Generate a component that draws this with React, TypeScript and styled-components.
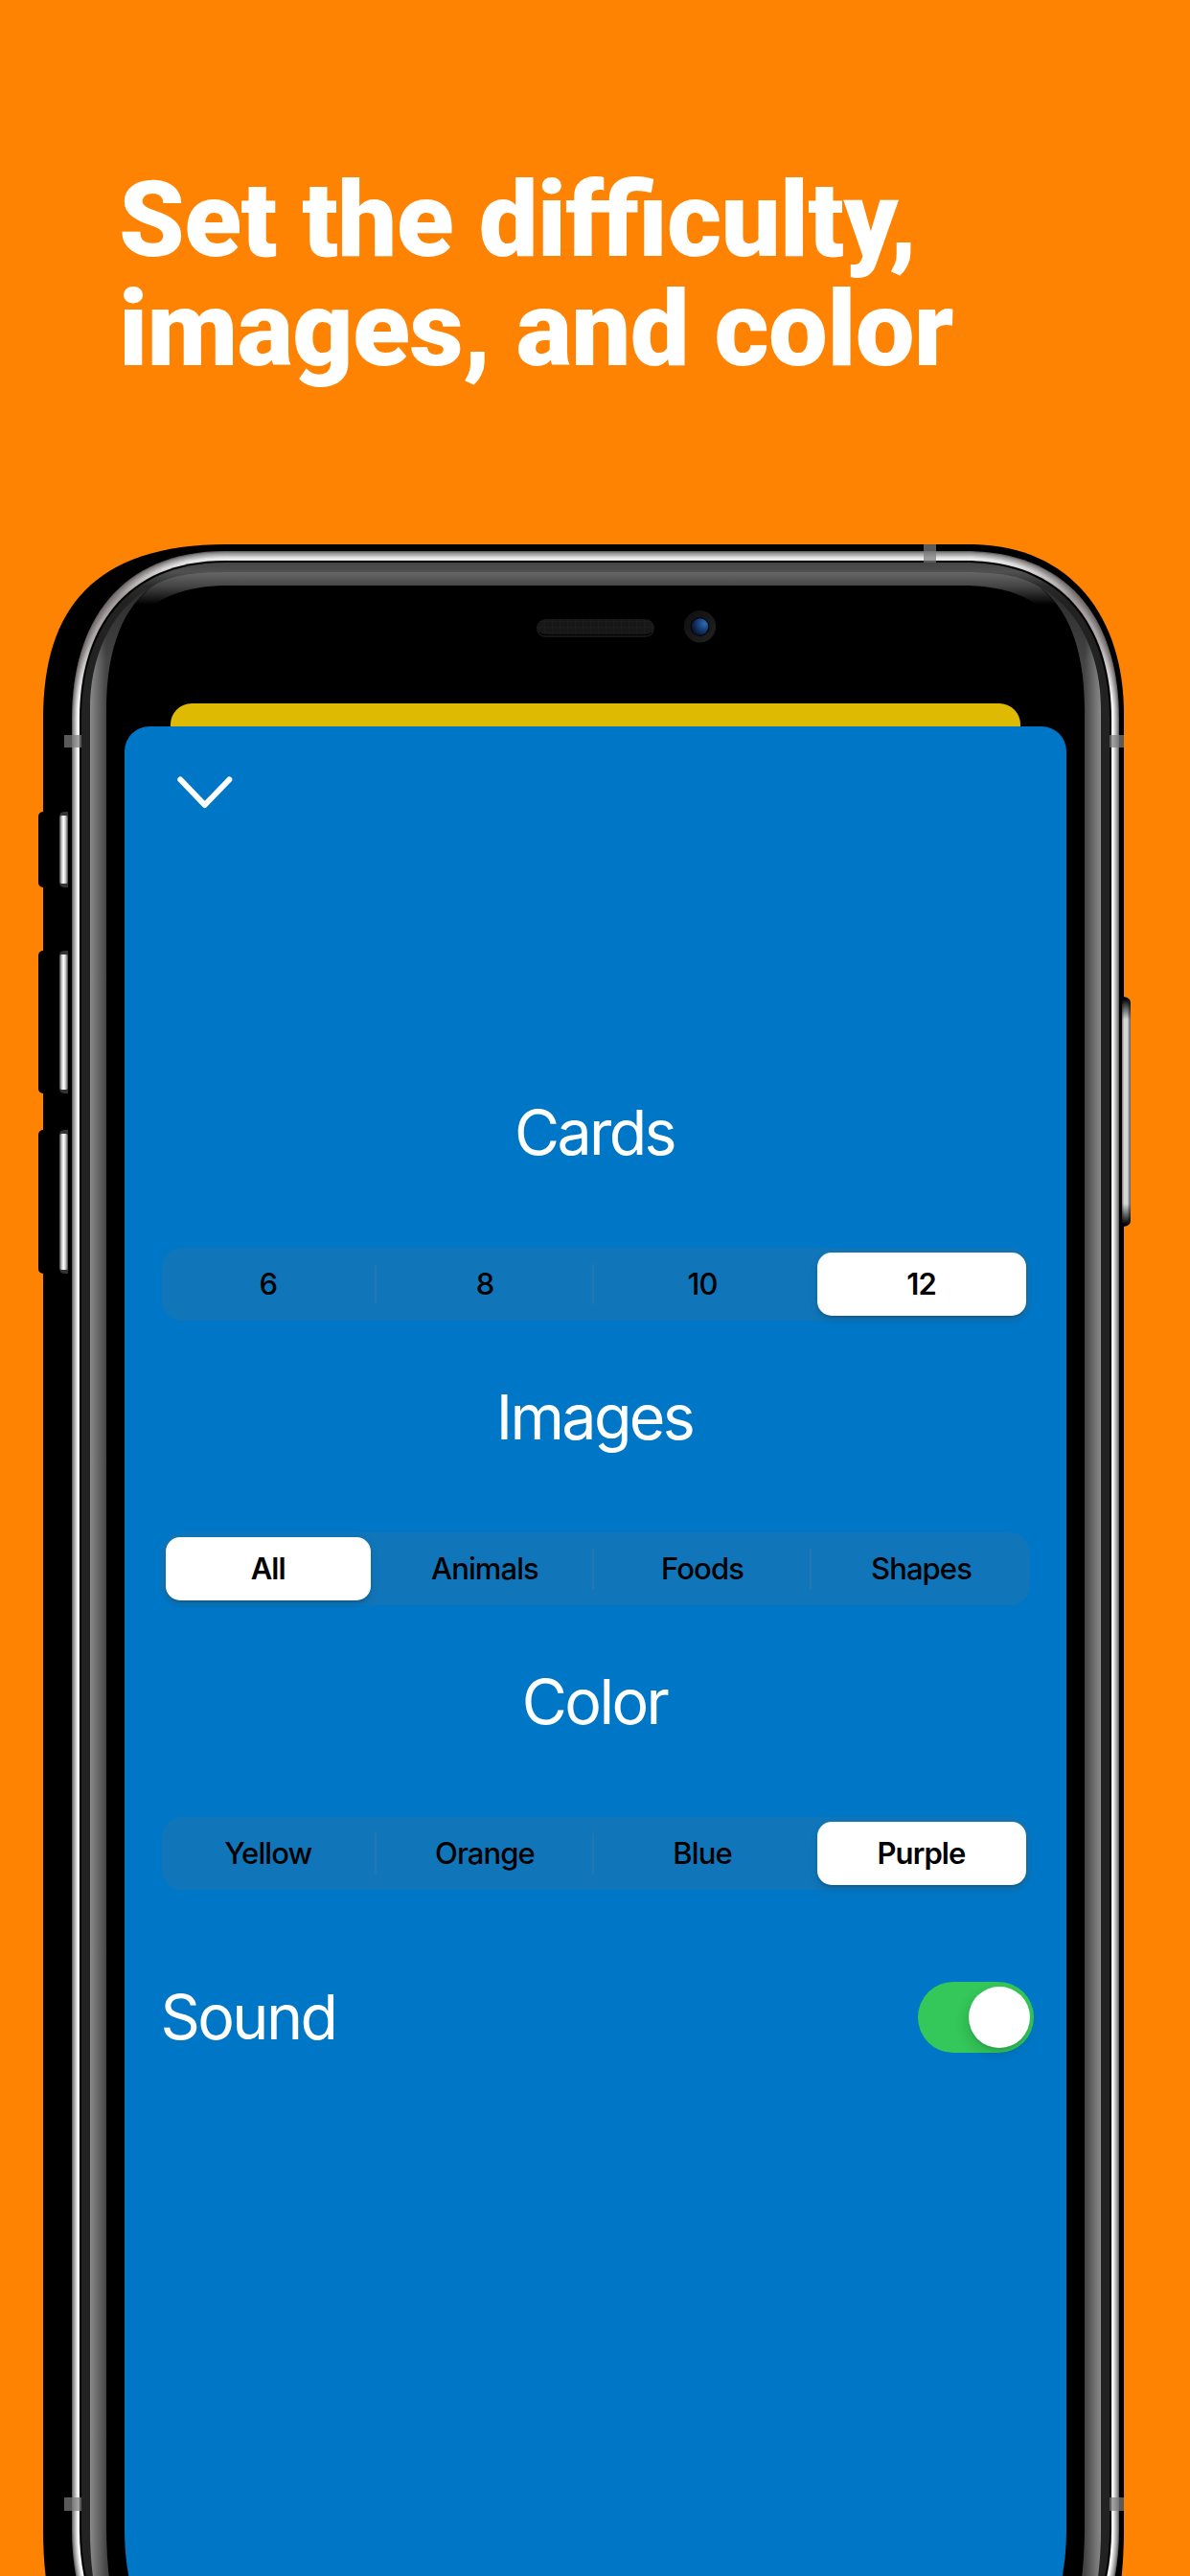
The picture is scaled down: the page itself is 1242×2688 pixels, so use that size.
import React, { useState } from 'react';
import styled, { createGlobalStyle } from 'styled-components';

const GlobalStyle = createGlobalStyle`
  html, body { margin: 0; padding: 0; background: #ff8303; }
  * { box-sizing: border-box; }
  button { border: 0; padding: 0; margin: 0; background: none; font: inherit; color: inherit; }
`;

const Page = styled.main`
  position: relative;
  display: flex;
  flex-direction: column;
  width: 1242px;
  height: 2688px;
  overflow: hidden;
  background: #ff8303;
  font-family: Inter, 'Liberation Sans', sans-serif;
`;

const Headline = styled.h1`
  flex: none;
  height: 734px;
  margin: 0;
  padding: 173px 0 0 124px;
  color: #fff;
  font-family: Roboto, 'Liberation Sans', sans-serif;
  font-size: 110px;
  font-weight: 900;
  line-height: 114px;
  letter-spacing: -0.7px;
  font-feature-settings: 'liga' 1;
`;

const DeviceArt = styled.svg`
  position: absolute;
  inset: 0;
  width: 1242px;
  height: 2688px;
`;

const BackCard = styled.div`
  position: relative;
  flex: none;
  height: 24px;
  margin: 0 177px 0 178px;
  border-radius: 22px 22px 0 0;
  background: #dfba02;
`;

const Sheet = styled.section`
  position: relative;
  flex: none;
  display: flex;
  flex-direction: column;
  width: 983px;
  height: 2012px;
  margin-left: 130px;
  padding: 50px 39px 0;
  border-radius: 26px 26px 60px 60px / 26px 26px 130px 130px;
  background: #0077c6;
`;

const CloseButton = styled.button`
  display: flex;
  align-self: flex-start;
  margin: 0 0 295.5px 15px;
  height: 38px;
`;

const Group = styled.div`
  display: flex;
  flex-direction: column;
  height: 297px;
`;

const Label = styled.h2<{ $inline?: boolean }>`
  margin: 0 0 0 ${(p) => (p.$inline ? -1.5 : 0)}px;
  padding-right: 2px;
  color: #fff;
  font-size: 64.5px;
  font-weight: 400;
  line-height: 80px;
  letter-spacing: -2.6px;
  text-align: ${(p) => (p.$inline ? 'left' : 'center')};
`;

const Segments = styled.div`
  display: grid;
  grid-template-columns: 219.5px 227px 227px 224px;
  height: 75.5px;
  width: 905.5px;
  margin-top: 80.5px;
  padding: 4.5px 4px;
  border-radius: 21px;
  background: #1076b9;
`;

const Segment = styled.div<{ $divider: boolean; $edge: 'start' | 'end' | 'none' }>`
  display: flex;
  padding-right: ${(p) => (p.$edge === 'start' ? 6 : 0)}px;
  padding-left: ${(p) => (p.$edge === 'end' ? 6 : 0)}px;
  background: ${(p) => (p.$divider ? 'linear-gradient(#2577b0, #2577b0) right center / 2px 42px no-repeat' : 'none')};
`;

const SegmentButton = styled.button<{ $selected: boolean }>`
  flex: 1;
  border-radius: 15px;
  background: ${(p) => (p.$selected ? '#fff' : 'transparent')};
  box-shadow: ${(p) => (p.$selected ? '0 4px 10px rgba(0, 0, 0, 0.13), 0 2px 2px rgba(0, 0, 0, 0.1)' : 'none')};
  color: #000;
  font-size: 31px;
  font-weight: ${(p) => (p.$selected ? 600 : 500)};
  letter-spacing: -0.9px;
`;

const SoundRow = styled.div`
  display: flex;
  align-items: center;
  justify-content: space-between;
  width: 910px;
  height: 74px;
  margin-top: 35px;
`;

const Switch = styled.button<{ $on: boolean }>`
  display: flex;
  justify-content: ${(p) => (p.$on ? 'flex-end' : 'flex-start')};
  align-items: center;
  width: 121px;
  height: 74px;
  padding: 0 4px;
  border-radius: 37px;
  background: ${(p) => (p.$on ? '#34c759' : '#78788a')};
`;

const Knob = styled.span`
  width: 64px;
  height: 64px;
  border-radius: 50%;
  background: #fff;
  box-shadow: -2px 6px 14px rgba(0, 0, 0, 0.14), 0 3px 2px rgba(0, 0, 0, 0.06);
`;

type Corner = { x: number; top: number; ex: number; cy: number; cx: number };

/* Closed body outline, symmetric about the frame's centre line (x = 621.5). */
const frame = ({ x, top, ex, cy, cx }: Corner) => {
  const m = (v: number) => 1243 - v;
  const y = 750;
  const b = 2640;
  const f = (v: number) => b + (y - v);
  return `M${x} ${y}C${x} ${cy} ${cx} ${top} ${ex} ${top}H${m(ex)}C${m(cx)} ${top} ${m(x)} ${cy} ${m(x)} ${y}V${b}C${m(x)} ${f(cy)} ${m(cx)} ${f(top)} ${m(ex)} ${f(top)}H${ex}C${cx} ${f(top)} ${x} ${f(cy)} ${x} ${b}Z`;
};

const steelOuter: Corner = { x: 75, top: 575, ex: 235, cy: 650, cx: 125 };
const steelInner: Corner = { x: 83, top: 585, ex: 235, cy: 658, cx: 129 };
const bezel: Corner = { x: 85, top: 587, ex: 235, cy: 660, cx: 130 };

const blend = (t: number): Corner => ({
  x: steelOuter.x + (steelInner.x - steelOuter.x) * t,
  top: steelOuter.top + (steelInner.top - steelOuter.top) * t,
  ex: 235,
  cy: steelOuter.cy + (steelInner.cy - steelOuter.cy) * t,
  cx: steelOuter.cx + (steelInner.cx - steelOuter.cx) * t,
});

const steel = ['#666', '#8c8b8b', '#a3a2a2', '#bab8b8', '#d2d1d1', '#e9e9e9', '#fbfbfb', '#f4f4f4'];

const sideGlow =
  'M94 2640V740C94 690 112 640 157 613C122 640 111 690 111 740V2640C111 2665 113 2685 116 2710H100C96 2685 94 2665 94 2640Z';

const leftButtons = [
  { y: 847, h: 79 },
  { y: 992, h: 149 },
  { y: 1179, h: 150 },
];

const bands = [
  { x: 67, y: 767, w: 18, h: 13 },
  { x: 1158, y: 767, w: 15, h: 13 },
  { x: 964, y: 568, w: 13, h: 19 },
  { x: 67, y: 2606, w: 18, h: 14 },
  { x: 1158, y: 2606, w: 15, h: 14 },
];

const Device = () => (
  <DeviceArt viewBox="0 0 1242 2688" aria-hidden="true">
    <defs>
      <linearGradient id="bezel" gradientUnits="userSpaceOnUse" x1="0" x2="0" y1="587" y2="628">
        <stop offset="0" stopColor="#444" />
        <stop offset="0.24" stopColor="#505050" />
        <stop offset="0.6" stopColor="#2a2a2a" />
        <stop offset="1" stopColor="#222" />
      </linearGradient>
      <linearGradient id="topGlow" gradientUnits="userSpaceOnUse" x1="0" x2="0" y1="597" y2="631">
        <stop offset="0" stopColor="#676767" />
        <stop offset="0.42" stopColor="#464646" />
        <stop offset="1" stopColor="#000" />
      </linearGradient>
      <linearGradient id="sideGlow" gradientUnits="userSpaceOnUse" x1="94" x2="111" y1="0" y2="0">
        <stop offset="0" stopColor="#8a8a8a" />
        <stop offset="1" stopColor="#444" />
      </linearGradient>
      <linearGradient id="tipFade" gradientUnits="userSpaceOnUse" x1="0" x2="0" y1="613" y2="690">
        <stop offset="0" stopColor="#222" stopOpacity="0.75" />
        <stop offset="1" stopColor="#222" stopOpacity="0" />
      </linearGradient>
      <linearGradient id="cornerShade" gradientUnits="userSpaceOnUse" x1="0" x2="0" y1="575" y2="735">
        <stop offset="0" stopColor="#6a6060" stopOpacity="0" />
        <stop offset="0.08" stopColor="#6a6060" stopOpacity="0.15" />
        <stop offset="0.3" stopColor="#6a6060" stopOpacity="0.62" />
        <stop offset="0.6" stopColor="#6a6060" stopOpacity="0.5" />
        <stop offset="1" stopColor="#6a6060" stopOpacity="0" />
      </linearGradient>
      <linearGradient id="key" x1="0" x2="1" y1="0" y2="0">
        <stop offset="0" stopColor="#444" />
        <stop offset="0.3" stopColor="#d5d5d5" />
        <stop offset="0.5" stopColor="#fff" />
        <stop offset="0.75" stopColor="#bbb" />
        <stop offset="1" stopColor="#444" />
      </linearGradient>
      <linearGradient id="power" x1="0" x2="1" y1="0" y2="0">
        <stop offset="0" stopColor="#777" />
        <stop offset="0.25" stopColor="#d6d8d8" />
        <stop offset="0.65" stopColor="#d4d6d6" />
        <stop offset="0.8" stopColor="#8d9194" />
        <stop offset="1" stopColor="#5c6064" />
      </linearGradient>
      <linearGradient id="powerEnds" x1="0" x2="0" y1="0" y2="1">
        <stop offset="0.01" stopColor="#000" />
        <stop offset="0.1" stopColor="#000" stopOpacity="0" />
        <stop offset="0.9" stopColor="#000" stopOpacity="0" />
        <stop offset="0.99" stopColor="#000" />
      </linearGradient>
      <pattern id="mesh" width="8" height="6" patternUnits="userSpaceOnUse">
        <rect width="8" height="6" fill="#171717" />
        <path d="M0 0H8M0 0V6" stroke="#202020" strokeWidth="1" />
      </pattern>
      <linearGradient id="lensRing" x1="0" x2="1" y1="0" y2="1">
        <stop offset="0" stopColor="#0e0e0e" />
        <stop offset="1" stopColor="#222" />
      </linearGradient>
      <radialGradient id="lens" cx="0.78" cy="0.3" r="0.75">
        <stop offset="0" stopColor="#2a6db5" />
        <stop offset="0.45" stopColor="#1b4680" />
        <stop offset="1" stopColor="#0a1a38" />
      </radialGradient>
    </defs>

    {leftButtons.map((b) => (
      <rect key={b.y} x="40" y={b.y} width="20" height={b.h} rx="5" fill="#000" />
    ))}
    <path
      d="M45 750C45 635 98 568 237 568H1012C1116 568 1173 642 1173 745V2640C1173 2665 1171 2690 1168 2710H51C47 2690 45 2665 45 2640Z"
      fill="#000"
    />
    <path d="M1171 1040H1173Q1180 1041 1180 1047V1273Q1180 1279 1173 1280H1171Z" fill="url(#power)" />
    <path d="M1171 1040H1173Q1180 1041 1180 1047V1273Q1180 1279 1173 1280H1171Z" fill="url(#powerEnds)" />

    {steel.map((color, i) => (
      <path key={color} d={frame(blend(i / steel.length))} fill={color} />
    ))}
    <path d={frame(steelOuter)} fill="url(#cornerShade)" />
    <path d={frame(steelInner)} fill="#000" />
    <path d={frame(bezel)} fill="url(#bezel)" />
    <path
      d="M111 2640V740C111 690 122 640 157 613L190 603H1053L1086 613C1121 640 1132 690 1132 740V2640C1132 2665 1130 2685 1127 2710H116C113 2685 111 2665 111 2640Z"
      fill="#000"
    />
    <path
      d="M240 597C200 597 178 600 157 613L138 632H160C178 618 205 611 240 611H1003C1038 611 1065 618 1083 632H1105L1086 613C1065 600 1043 597 1003 597Z"
      fill="url(#topGlow)"
    />
    <path d={sideGlow} fill="url(#sideGlow)" />
    <path d={sideGlow} fill="url(#tipFade)" />
    <g transform="translate(1243 0) scale(-1 1)">
      <path d={sideGlow} fill="url(#sideGlow)" />
      <path d={sideGlow} fill="url(#tipFade)" />
    </g>

    {bands.map((b) => (
      <rect key={`${b.x}-${b.y}`} x={b.x} y={b.y} width={b.w} height={b.h} fill="#7b7d7c" fillOpacity="0.72" />
    ))}
    {leftButtons.map((b) => (
      <g key={b.y}>
        <path d={`M71 ${b.y}H68Q62 ${b.y} 62 ${b.y + 5}V${b.y + b.h - 5}Q62 ${b.y + b.h} 68 ${b.y + b.h}H71Z`} fill="#333" />
        <rect x="62" y={b.y + 4} width="9" height={b.h - 8} rx="2.5" fill="url(#key)" />
      </g>
    ))}

    <rect x="560" y="646" width="123" height="19" rx="9.5" fill="url(#mesh)" />
    <path d="M563 660Q566 662.5 570 662.5H673Q677 662.5 680 660" stroke="#060606" strokeWidth="1.5" fill="none" />
    <circle cx="730.5" cy="653.7" r="16.7" fill="url(#lensRing)" />
    <circle cx="730.5" cy="654" r="10" fill="#060608" />
    <circle cx="730.5" cy="654" r="8.7" fill="url(#lens)" />
  </DeviceArt>
);

const groups = [
  { label: 'Cards', options: ['6', '8', '10', '12'], initial: 3 },
  { label: 'Images', options: ['All', 'Animals', 'Foods', 'Shapes'], initial: 0 },
  { label: 'Color', options: ['Yellow', 'Orange', 'Blue', 'Purple'], initial: 3 },
];

const Picker = ({ label, options, initial }: (typeof groups)[number]) => {
  const [selected, setSelected] = useState(initial);
  return (
    <Group>
      <Label>{label}</Label>
      <Segments role="radiogroup" aria-label={label}>
        {options.map((option, i) => (
          <Segment
            key={option}
            $divider={i < options.length - 1 && i !== selected && i + 1 !== selected}
            $edge={i === 0 ? 'start' : i === options.length - 1 ? 'end' : 'none'}
          >
            <SegmentButton role="radio" aria-checked={i === selected} $selected={i === selected} onClick={() => setSelected(i)}>
              {option}
            </SegmentButton>
          </Segment>
        ))}
      </Segments>
    </Group>
  );
};

export default function App() {
  const [sound, setSound] = useState(true);
  return (
    <Page>
      <GlobalStyle />
      <Device />
      <Headline>
        Set the difficulty,
        <br />
        images, and color
      </Headline>
      <BackCard />
      <Sheet>
        <CloseButton aria-label="Close">
          <svg width="60" height="38" viewBox="0 0 60 38" fill="none">
            <path d="M4.3 5.5L29.7 32L55.3 5.5" stroke="#fff" strokeWidth="6" strokeLinecap="round" strokeLinejoin="round" />
          </svg>
        </CloseButton>
        {groups.map((g) => (
          <Picker key={g.label} {...g} />
        ))}
        <SoundRow>
          <Label $inline>Sound</Label>
          <Switch role="switch" aria-checked={sound} aria-label="Sound" $on={sound} onClick={() => setSound(!sound)}>
            <Knob />
          </Switch>
        </SoundRow>
      </Sheet>
    </Page>
  );
}
